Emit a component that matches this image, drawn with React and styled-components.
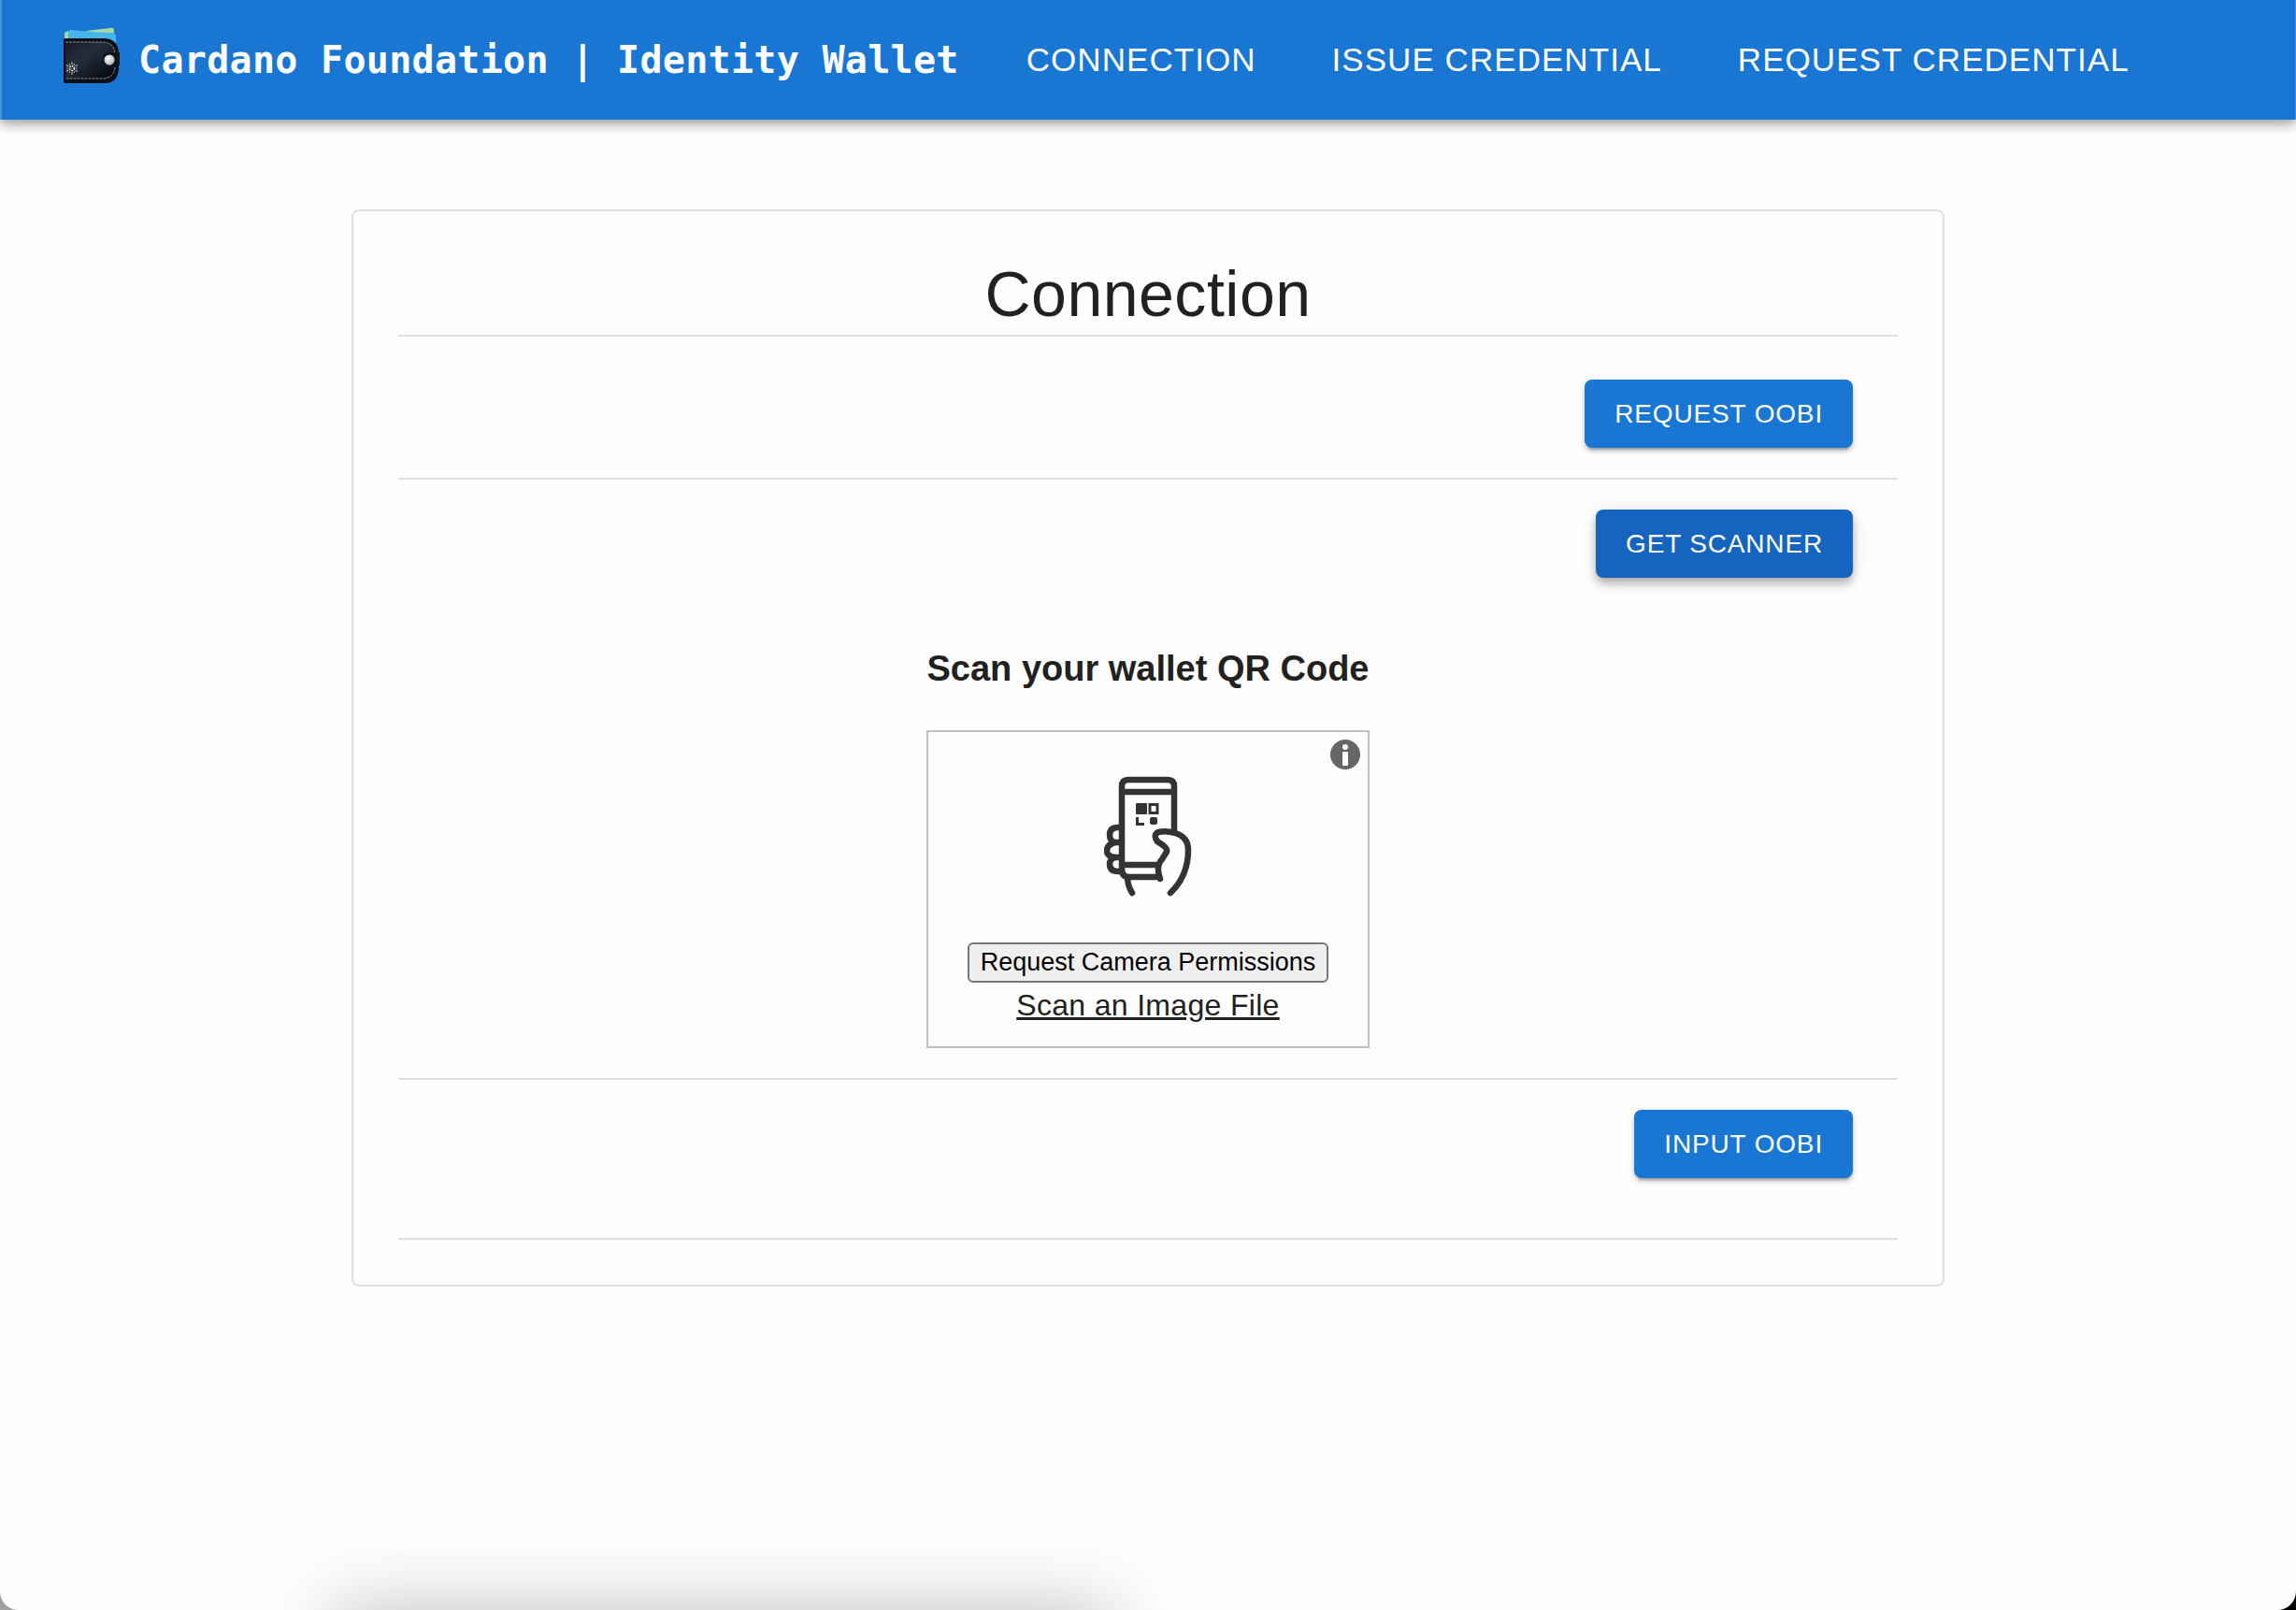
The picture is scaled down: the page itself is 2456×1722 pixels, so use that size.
import React from 'react';
import styled, { createGlobalStyle, css } from 'styled-components';

const SANS = '"Liberation Sans", Helvetica, Arial, sans-serif';
const MONO = '"DejaVu Sans Mono", Menlo, monospace';

const GlobalStyle = createGlobalStyle`
  *, *::before, *::after { box-sizing: border-box; }
  html { background: linear-gradient(90deg, #a0a0a0 50%, #000 50%); }
  body { margin: 0; font-family: ${SANS}; color: #212121; }
`;

const Window = styled.div`
  position: relative;
  display: flex;
  flex-direction: column;
  min-height: 100vh;
  background: #fefefe;
  border-radius: 0 0 20px 20px;
  overflow: hidden;
`;

const AppBar = styled.header`
  display: flex;
  align-items: center;
  height: 128px;
  padding: 0 66px;
  background: #1976d2;
  border: solid #4a90da;
  border-width: 0 1px 0 2px;
  color: #fff;
  box-shadow: 0 4px 8px -2px rgba(0, 0, 0, 0.2), 0 8px 10px rgba(0, 0, 0, 0.14),
    0 2px 20px rgba(0, 0, 0, 0.12);
`;

const Brand = styled.a`
  display: flex;
  align-items: center;
  gap: 20px;
  color: inherit;
  text-decoration: none;
  font: 700 40px/64px ${MONO};
  letter-spacing: 0.0075em;
  white-space: nowrap;
`;

const Logo = styled.svg`
  width: 60px;
  height: 60px;
  margin-bottom: 10px;
`;

const Nav = styled.nav`
  display: flex;
  gap: 81px;
  margin-left: 72px;
`;

const NavLink = styled.a`
  color: inherit;
  text-decoration: none;
  text-transform: uppercase;
  font-size: 35px;
  line-height: 64px;
  letter-spacing: 0.03em;
  white-space: nowrap;
`;

const Main = styled.main`
  width: 100%;
  max-width: 1800px;
  margin: 96px auto;
  padding: 0 48px;
`;

const Card = styled.section`
  padding: 48px;
  border: 2px solid #e0e0e0;
  border-radius: 8px;
`;

const Title = styled.h1`
  margin: 0 0 4px;
  font-size: 68px;
  font-weight: 400;
  line-height: 80px;
  letter-spacing: 0.0075em;
  text-align: center;
`;

const Row = styled.div`
  display: flex;
  flex-direction: column;
  gap: 32px;
  padding: ${({ $top = 32 }) => $top}px 0 ${({ $bottom = 32 }) => $bottom}px;
  border-top: 2px solid #e0e0e0;

  &:last-child { border-bottom: 2px solid #e0e0e0; }
`;

const Action = styled.button`
  align-self: flex-end;
  margin-right: 48px;
  padding: 12px 32px;
  border: 0;
  border-radius: 8px;
  background: #1976d2;
  color: #fff;
  font: 400 28px/49px ${SANS};
  letter-spacing: 0.03em;
  text-transform: uppercase;
  box-shadow: 0 6px 2px -4px rgba(0, 0, 0, 0.2), 0 4px 4px rgba(0, 0, 0, 0.14),
    0 2px 10px rgba(0, 0, 0, 0.12);

  ${({ $active }) => $active && css`
    background: #1565c0;
    box-shadow: 0 4px 8px -2px rgba(0, 0, 0, 0.2), 0 8px 10px rgba(0, 0, 0, 0.14),
      0 2px 20px rgba(0, 0, 0, 0.12);
  `}
`;

const Scanner = styled.div`
  align-self: center;
  display: flex;
  flex-direction: column;
  min-width: 474px;
`;

const ScannerTitle = styled.h2`
  margin: 37px 0;
  font-size: 38px;
  line-height: 57px;
  text-align: center;
  white-space: nowrap;
`;

const ScannerBox = styled.div`
  position: relative;
  display: flex;
  flex-direction: column;
  align-items: center;
  padding: 47px 0 20px;
  border: 2px solid #c0c0c0;
`;

const InfoButton = styled.button`
  position: absolute;
  top: 8px;
  right: 8px;
  width: 32px;
  height: 32px;
  padding: 0;
  border: 0;
  background: none;

  svg { display: block; width: 100%; height: 100%; }
`;

const PhoneArt = styled.svg`
  width: 94px;
  height: 130px;
  margin-bottom: 48px;
`;

const PermissionButton = styled.button`
  padding: 4px 12px;
  border: 2px solid #767676;
  border-radius: 6px;
  background: #efefef;
  color: #000;
  font: 400 27px/31px ${SANS};
`;

const FileLink = styled.a`
  color: inherit;
  font-size: 32px;
  line-height: 48px;
  letter-spacing: 0.01em;
  text-decoration: underline;
  text-decoration-thickness: 3px;
`;

const DockShadow = styled.div`
  position: absolute;
  top: 100%;
  left: 15%;
  width: 33%;
  height: 80px;
  box-shadow: 0 10px 80px 12px rgba(0, 0, 0, 0.24);
  pointer-events: none;
`;

function WalletLogo() {
  const rays = Array.from({ length: 12 }, (_, i) => i * 30);
  return (
    <Logo viewBox="0 0 60 60" aria-hidden="true">
      <defs>
        <linearGradient id="leather" x1="0" y1="0" x2="1" y2="1">
          <stop offset="0" stopColor="#161b26" />
          <stop offset="0.4" stopColor="#252d3d" />
          <stop offset="0.75" stopColor="#10141d" />
          <stop offset="1" stopColor="#05070b" />
        </linearGradient>
        <radialGradient id="snap" cx="0.4" cy="0.35" r="0.7">
          <stop offset="0" stopColor="#fafafa" />
          <stop offset="1" stopColor="#b4b4b4" />
        </radialGradient>
      </defs>
      <path d="M1 14V7q0-2 2-2l2-1v10z" fill="#a3d9a5" />
      <path d="M24 4L50 1q4-1 4 3v10H24z" fill="#a3d9a5" />
      <path d="M5 14V5q0-2 3-2l24 2 14 1h7q3 1 3 4v8H5z" fill="#45b5ec" />
      <path d="M0 13q1-1 3-1h41q14 1 15 15v18q-1 14-14 15H2q-2 0-2-2z" fill="#0b0e15" />
      <path d="M2 16h40q12 1 13 12v14q-1 12-12 13H2z" fill="url(#leather)" />
      <path
        d="M2 16h41q11 1 12 12M55 43q-1 11-12 12H2"
        fill="none"
        stroke="#8c8f94"
        strokeWidth="1"
        strokeDasharray="3 1"
      />
      <path d="M47 27h13v14H48q-6-1-6-7t5-7z" fill="#10141c" />
      <circle cx="49" cy="35" r="5.5" fill="url(#snap)" />
      <g transform="translate(9 44)" stroke="#f3eedd" fill="none">
        <circle r="2.4" strokeWidth="1.6" strokeDasharray="1.6 0.9" />
        {rays.map((a, i) => (
          <path
            key={a}
            d={i % 2 ? 'M0-4v-1.4' : 'M0-4.2v-2.6'}
            strokeWidth="0.9"
            transform={`rotate(${a})`}
          />
        ))}
      </g>
    </Logo>
  );
}

function PhoneInHand() {
  return (
    <PhoneArt viewBox="0 0 94 130" role="img" aria-label="Phone scanning a code">
      <g fill="none" stroke="#333" strokeWidth="6.5" strokeLinecap="round" strokeLinejoin="round">
        <path d="M75 58V11q0-7-7-7H26q-7 0-7 7v89q0 8 8 8h32" />
        <path d="M19 17h56M19 95h37" strokeLinecap="butt" />
        <path d="M19 55h-4q-9 0-9 8 0 7 6 8h7M12 71q-9 2-9 9 0 6 9 7h7M12 87q-6 2-6 7 0 8 9 8h4" />
        <path d="M25 110q1 9 5 15" />
        <path d="M60 110Q55 96 62 89L67 81Q68 78 63 74L57 70Q52 63 58 60 66 58 76 61 90 65 90 79 90 107 71 125" />
      </g>
      <rect x="34" y="29" width="12" height="12" rx="1" fill="#333" />
      <rect x="49" y="30.5" width="8" height="9" fill="none" stroke="#333" strokeWidth="3" />
      <path d="M35.500 44v7.500h7.500" fill="none" stroke="#333" strokeWidth="3" />
      <rect x="49" y="44" width="8" height="8" rx="2" fill="#333" />
    </PhoneArt>
  );
}

export default function App() {
  return (
    <>
      <GlobalStyle />
      <Window>
        <AppBar>
          <Brand href="#">
            <WalletLogo />
            Cardano Foundation | Identity Wallet
          </Brand>
          <Nav>
            <NavLink href="#connection">Connection</NavLink>
            <NavLink href="#issue">Issue Credential</NavLink>
            <NavLink href="#request">Request Credential</NavLink>
          </Nav>
        </AppBar>
        <Main>
          <Card>
            <Title>Connection</Title>
            <Row $top={46}>
              <Action type="button">Request OOBI</Action>
            </Row>
            <Row>
              <Action type="button" $active>Get Scanner</Action>
              <Scanner>
                <ScannerTitle>Scan your wallet QR Code</ScannerTitle>
                <ScannerBox>
                  <InfoButton type="button" aria-label="Info">
                    <svg viewBox="0 0 32 32">
                      <circle cx="16" cy="16" r="16" fill="#666" />
                      <circle cx="16" cy="8" r="3" fill="#fff" />
                      <rect x="13" y="13" width="6" height="15" rx="1" fill="#fff" />
                    </svg>
                  </InfoButton>
                  <PhoneInHand />
                  <PermissionButton type="button">Request Camera Permissions</PermissionButton>
                  <FileLink href="#file">Scan an Image File</FileLink>
                </ScannerBox>
              </Scanner>
            </Row>
            <Row $bottom={64}>
              <Action type="button">Input OOBI</Action>
            </Row>
          </Card>
        </Main>
        <DockShadow />
      </Window>
    </>
  );
}
